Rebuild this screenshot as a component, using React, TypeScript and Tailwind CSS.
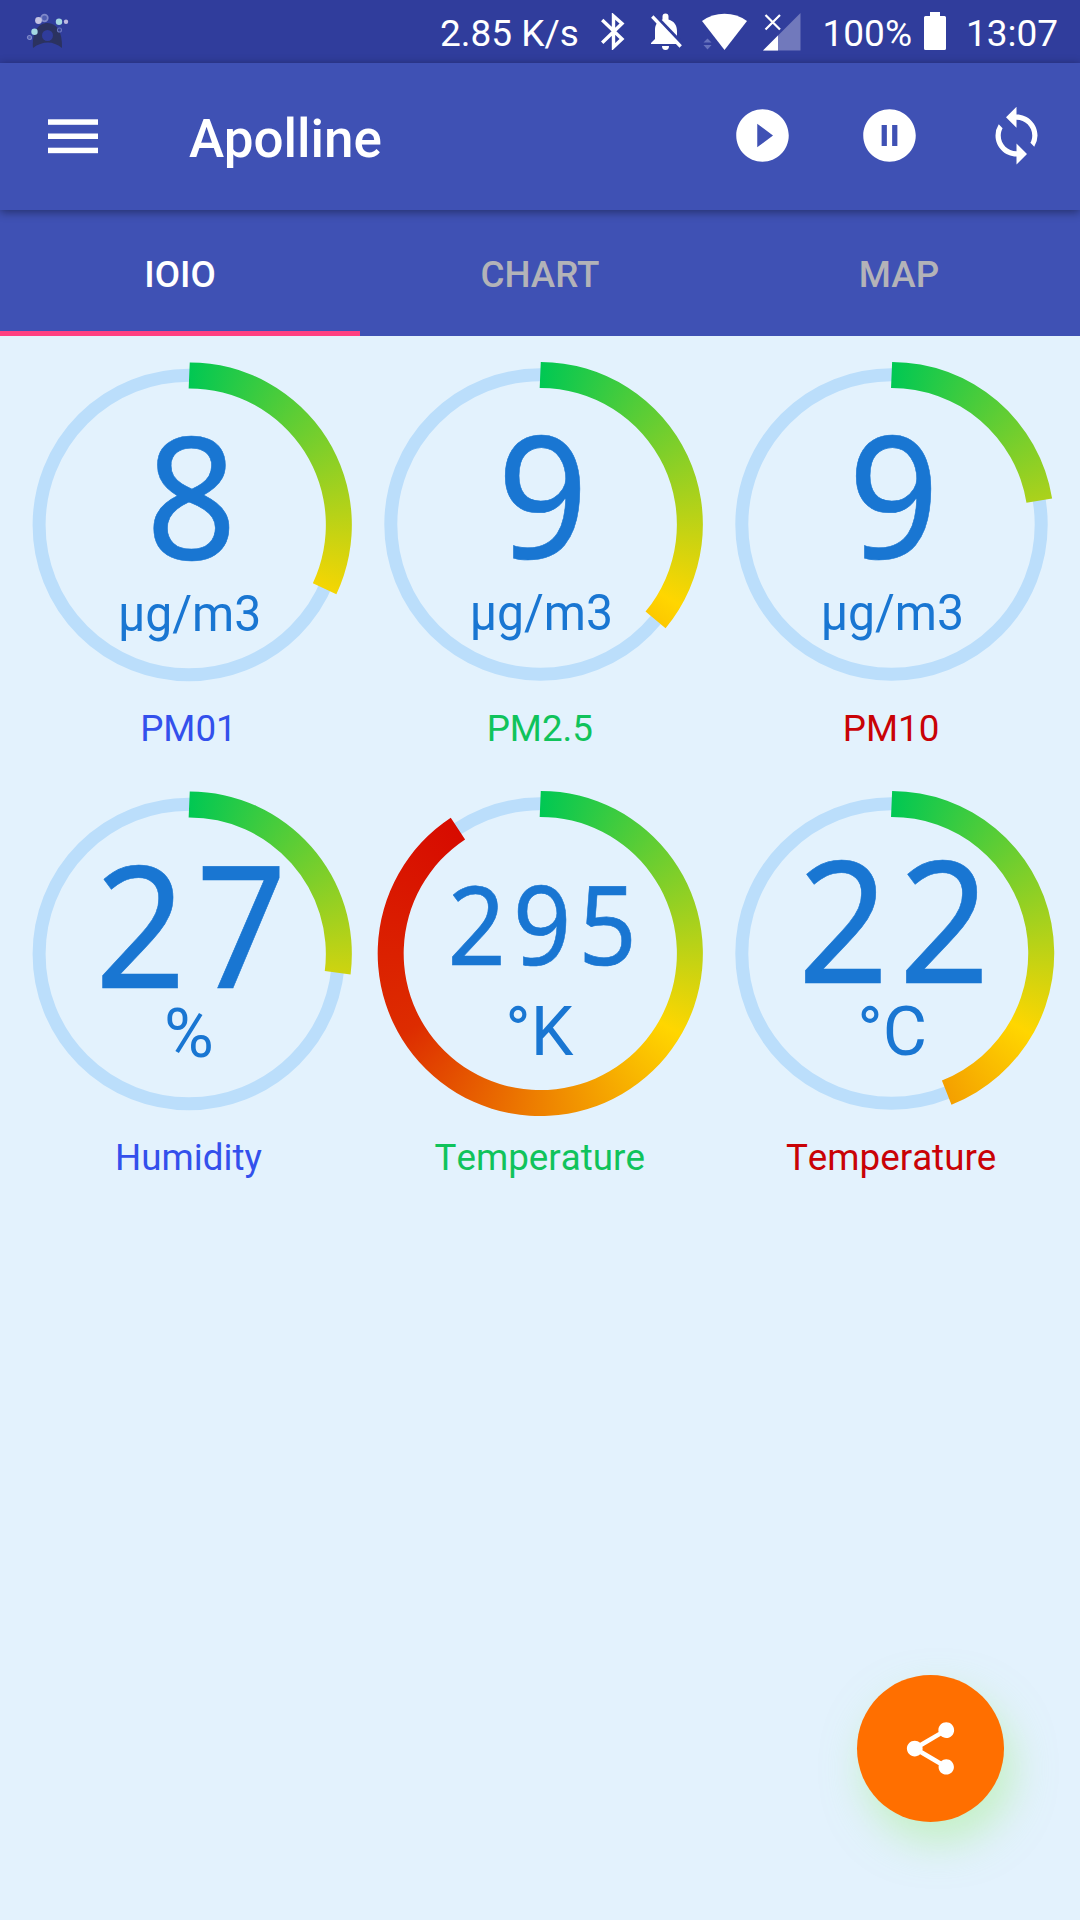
import React from "react";
import {
  MdPlayCircleFilled,
  MdPauseCircleFilled,
  MdSync,
  MdShare,
} from "react-icons/md";

type GaugeData = {
  digits: string;
  size: number;
  pitch: number;
  shift: number;
  baseline: number;
  unit: string;
  unitX: number;
  unitSize: number;
  unitBaseline: number;
  sweep: number;
  cx: number;
  cy: number;
  label: string;
  labelColor: string;
};

const BLUE = "text-[#3350ec]";
const GREEN = "text-[#10c35b]";
const RED = "text-[#c90206]";

const gauges: GaugeData[] = [
  { digits: "8", size: 170, pitch: 101, shift: 3, baseline: 34, unit: "µg/m3", unitX: 176.6, unitSize: 49.5, unitBaseline: 106, sweep: 115.2, cx: 175.8, cy: 176, label: "PM01", labelColor: BLUE },
  { digits: "9", size: 170, pitch: 101, shift: 2.2, baseline: 33.5, unit: "µg/m3", unitX: 176.3, unitSize: 49.5, unitBaseline: 105.5, sweep: 129.6, cx: 175.5, cy: 175.5, label: "PM2.5", labelColor: GREEN },
  { digits: "9", size: 170, pitch: 101, shift: 2.2, baseline: 33.5, unit: "µg/m3", unitX: 176.3, unitSize: 49.5, unitBaseline: 105.5, sweep: 80.8, cx: 175.5, cy: 175.5, label: "PM10", labelColor: RED },
  { digits: "27", size: 170, pitch: 101, shift: 2.5, baseline: 34, unit: "%", unitX: 176, unitSize: 68, unitBaseline: 102.5, sweep: 97.2, cx: 175.8, cy: 176, label: "Humidity", labelColor: BLUE },
  { digits: "295", size: 109, pitch: 65.5, shift: 1.7, baseline: 11, unit: "°K", unitX: 174.3, unitSize: 68, unitBaseline: 101.7, sweep: 326.6, cx: 175.5, cy: 175.5, label: "Temperature", labelColor: GREEN },
  { digits: "22", size: 170, pitch: 101, shift: 2.2, baseline: 29.5, unit: "°C", unitX: 176.2, unitSize: 68, unitBaseline: 101.7, sweep: 158.4, cx: 175.5, cy: 175.5, label: "Temperature", labelColor: RED },
];

const OUTER = 162.6;
const INNER = 136.6;
const DIGIT_SCALE = 0.935;

function barPath(cx: number, cy: number, sweep: number) {
  const a = (sweep * Math.PI) / 180;
  const large = sweep > 180 ? 1 : 0;
  const px = (r: number) => cx + r * Math.sin(a);
  const py = (r: number) => cy - r * Math.cos(a);
  return `M ${cx + 0.5} ${cy - OUTER} A ${OUTER} ${OUTER} 0 ${large} 1 ${px(OUTER)} ${py(OUTER)} L ${px(INNER)} ${py(INNER)} A ${INNER} ${INNER} 0 ${large} 0 ${cx - 0.6} ${cy - INNER} Z`;
}

function Gauge({ g }: { g: GaugeData }) {
  const n = g.digits.length;
  const xs = g.digits
    .split("")
    .map((_, i) => ((i - (n - 1) / 2) * g.pitch) / DIGIT_SCALE)
    .join(" ");
  const unitScale = g.unit.startsWith("µ") ? 0.972 : 1;
  return (
    <div className="flex flex-col items-center">
      <div className="relative h-[350px] w-[351px]">
        <svg className="absolute inset-0 h-full w-full" viewBox="0 0 351 350">
          <circle cx={g.cx} cy={g.cy} r="149.7" fill="none" stroke="#bbdefb" strokeWidth="13" />
        </svg>
        <div
          className="absolute inset-0"
          style={{
            clipPath: `path("${barPath(g.cx, g.cy, g.sweep)}")`,
            background: `conic-gradient(from 0deg at ${g.cx}px ${g.cy}px, #00c853 0deg, #ffd600 120deg, #dd2c00 240deg, #d50000 356deg, #00c853 356deg)`,
          }}
        />
        <svg className="absolute inset-0 h-full w-full" viewBox="0 0 351 350" fill="#1976d2" textAnchor="middle">
          <text
            transform={`translate(${175.5 + g.shift} ${g.cy + g.baseline}) scale(${DIGIT_SCALE} 1)`}
            x={xs}
            y="0"
            fontSize={g.size}
            fontFamily="'Noto Sans', 'Open Sans', sans-serif"
            stroke="#1976d2"
            strokeWidth="0.6"
          >
            {g.digits}
          </text>
          <text
            transform={`translate(${g.unitX} ${g.cy + g.unitBaseline}) scale(${unitScale} 1)`}
            fontSize={g.unitSize}
            fontFamily="Roboto, sans-serif"
          >
            {g.unit}
          </text>
        </svg>
      </div>
      <div className={`h-[79px] pt-[8px] pr-px text-[36.75px] leading-[44px] [font-kerning:none] ${g.labelColor}`}>
        {g.label}
      </div>
    </div>
  );
}

function AppLogo() {
  return (
    <svg width="44" height="38" viewBox="0 0 44 38">
      <path d="M7 36 C6 20 12 11 21.500 11 C31 11 36.500 20 36 36 Q29 30.500 22 30.500 Q14 30.500 7 36Z" fill="#2b3260" />
      <circle cx="21.500" cy="23.500" r="5.500" fill="#303c9b" />
      <circle cx="18.500" cy="6" r="3.300" fill="#4f5db0" stroke="#7f89c9" strokeWidth="1.700" />
      <circle cx="12.500" cy="8.500" r="3.400" fill="#c3c3e2" />
      <circle cx="33" cy="9.700" r="3.200" fill="#a5d8e2" />
      <circle cx="40" cy="9.700" r="2.200" fill="#bfb9e0" />
      <circle cx="8.500" cy="19.700" r="3.200" fill="#a5d8e2" />
      <circle cx="33.500" cy="18" r="2" fill="none" stroke="#6672bb" strokeWidth="1.200" />
      <circle cx="3.500" cy="25.500" r="2" fill="#4f5db0" stroke="#7f89c9" strokeWidth="1.200" />
    </svg>
  );
}

function StatusBar() {
  return (
    <div className="flex h-[63px] items-start bg-[#303d9c] pt-[12px] text-[37px] leading-[38px] text-white">
      <div className="ml-[26px] w-[414px]">
        <AppLogo />
      </div>
      <div className="w-[161px] pt-[2.500px] whitespace-nowrap">2.85 K/s</div>
      <svg className="mt-px" width="24" height="37" viewBox="0 0 24 37" fill="none" stroke="#fff" strokeWidth="3.400">
        <path d="M1.200 7 L21 26 L12.500 34 V3 L21 10.500 L1.200 29.800" />
      </svg>
      <svg className="mt-px ml-[25px]" width="33" height="38" viewBox="0 0 33 38" fill="#fff">
        <path d="M12.500 6.500 V3.500 a3 3 0 0 1 6 0 V6.500 C24 8 27 12.500 27 18 V27 L30 30.500 V31 H1 V30 L5 26 V17 C5 11.500 7.500 8 12.500 6.500Z" />
        <path d="M12 33 h7 a3.500 4 0 0 1 -7 0Z" />
        <path d="M5 2.500 L33 31.500" stroke="#303d9c" strokeWidth="3.500" />
        <path d="M2.300 3.500 L30.700 33.500" stroke="#fff" strokeWidth="3.300" />
      </svg>
      <svg className="mt-px ml-[18px]" width="47" height="38" viewBox="0 0 47 38">
        <path d="M1 8 Q11 0.800 23.500 0.800 Q36 0.800 46 8 L23.500 37Z" fill="#fff" />
        <path d="M2.500 29.500 L6.500 25.500 L10.500 29.500Z M2.500 32 H10.500 L6.500 36.500Z" fill="#6672bd" />
      </svg>
      <svg className="mt-px ml-[14.500px]" width="38" height="38" viewBox="0 0 38 38">
        <path d="M37.500 0 V37.500 H0Z" fill="#7179bc" />
        <path d="M15 22.500 V37.500 H0Z" fill="#fff" />
        <path d="M2.500 2 L17 16.500 M17 2 L2.500 16.500" stroke="#fff" strokeWidth="2.200" />
      </svg>
      <div className="ml-[22px] w-[101.500px] pt-[2.500px]">100%</div>
      <svg width="22" height="38" viewBox="0 0 22 38" fill="#fff">
        <path d="M6 0 H16 V4 H20.500 Q22 4 22 5.500 V36.500 Q22 38 20.500 38 H1.500 Q0 38 0 36.500 V5.500 Q0 4 1.500 4 H6Z" />
      </svg>
      <div className="ml-[20px] pt-[2.500px]">13:07</div>
    </div>
  );
}

function Toolbar() {
  return (
    <header className="relative z-10 flex h-[147px] items-start bg-[#3f51b4] pr-[32px] text-white shadow-[0_2px_9px_rgba(0,0,0,0.42)]">
      <button className="mt-[56px] ml-[48px]" aria-label="Menu">
        <svg width="50" height="35" viewBox="0 0 50 35" fill="#fff">
          <rect y="0.300" width="50" height="5.500" />
          <rect y="14.500" width="50" height="5.500" />
          <rect y="28.700" width="50" height="5.500" />
        </svg>
      </button>
      <h1 className="mt-[45px] ml-[91px] flex-1 text-[53px] leading-[62px] font-medium">Apolline</h1>
      <div className="flex gap-[64px] pt-[41px]">
        <MdPlayCircleFilled size={63} />
        <MdPauseCircleFilled size={63} />
        <MdSync size={63} />
      </div>
    </header>
  );
}

function Tabs() {
  return (
    <nav className="grid h-[126px] grid-cols-3 bg-[#3f51b4] text-center text-[36.75px] leading-[44px] font-medium">
      <div className="border-b-[5px] border-[#ff4081] pt-[43px] text-white">IOIO</div>
      <div className="pt-[43px] text-[#b3b3b8]">CHART</div>
      <div className="pt-[43px] pr-[2px] text-[#b3b3b8]">MAP</div>
    </nav>
  );
}

export default function App() {
  return (
    <div className="relative h-[1920px] w-[1080px] overflow-hidden bg-[#e3f2fd] font-[Roboto,sans-serif]">
      <StatusBar />
      <Toolbar />
      <Tabs />
      <main className="mt-[13px] ml-[13.3px] grid w-[1054px] grid-cols-3">
        {gauges.map((g, i) => (
          <Gauge key={i} g={g} />
        ))}
      </main>
      <button
        aria-label="Share"
        className="absolute top-[1675px] left-[857px] flex h-[147px] w-[147px] items-center justify-center rounded-full bg-[#ff6f00] text-white shadow-[8px_20px_40px_rgba(165,240,140,0.5)]"
      >
        <MdShare size={63} />
      </button>
    </div>
  );
}
